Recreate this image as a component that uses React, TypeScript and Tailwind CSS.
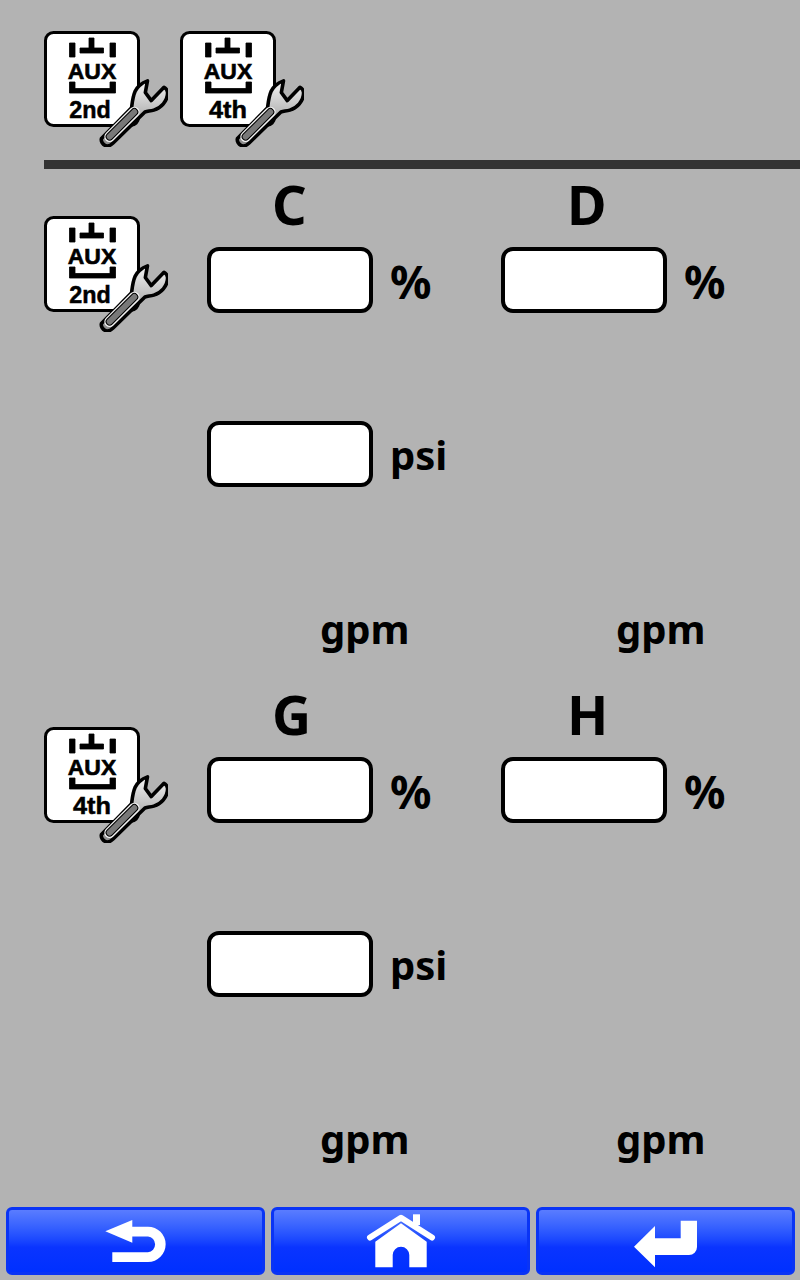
import { useId } from 'react';

function AuxWrench({ label }: { label: string }) {
  const id = useId();
  const wrench = 'M102.700 51.700 L100.700 62.700 L106.300 70.300 L118.300 57.700 C120.500 59 121.700 61 121.700 63 C121.700 67 120 70.500 117.700 73.300 C115 76.500 112 78.300 108.700 79.300 C105.500 80.200 103 80.200 100.300 81 L70.300 110.300 C68 112.500 65.500 113.500 63.700 113 C60.500 112 58.500 108.500 59.300 106 L87.700 77 C88.500 71 89 66 91 61.700 C92.500 59 93.500 57.500 95.300 56 C97.500 54 100 52.500 102.700 51.700 Z';
  return (
    <svg width="124" height="116" viewBox="0 0 124 116" className="block shrink-0">
      <defs>
        <linearGradient id={id} x1="0" y1="0" x2="0" y2="1">
          <stop offset="0" stopColor="#f4f4f4" />
          <stop offset="0.45" stopColor="#bdbdbd" />
          <stop offset="1" stopColor="#8a8a8a" />
        </linearGradient>
      </defs>
      <rect x="1.500" y="1.500" width="93" height="93" rx="8" fill="#fff" stroke="#000" strokeWidth="3" />
      <path d="M25.500 12h5.500v14h-5.500zM66 12h5.500v14H66zM45 7h5v10h9.500v5H36v-5h9zM25.500 51h5.500v6.500h35V51h5.500v11H25.500z" fill="#000" stroke="#000" strokeWidth="0.800" />
      <text x="48" y="48" textAnchor="middle" textLength="48.500" lengthAdjust="spacingAndGlyphs" fontFamily="'Liberation Sans', sans-serif" fontWeight="700" fontSize="22.500" fill="#000" stroke="#000" strokeWidth="0.600">AUX</text>
      <text x={label === '2nd' ? 46 : 48} y="86.500" textAnchor="middle" textLength={label === '2nd' ? 41.500 : 38} lengthAdjust="spacingAndGlyphs" fontFamily="'Liberation Sans', sans-serif" fontWeight="700" fontSize="24.500" fill="#000" stroke="#000" strokeWidth="0.500">{label}</text>
      <g transform="translate(90 82) scale(1.06) translate(-90 -82)">
        <path d={wrench} fill={`url(#${id})`} stroke="#000" strokeWidth="3.400" strokeLinejoin="round" />
        <path d="M90.300 81 L67 104.300" stroke="#f4f4f4" strokeWidth="10" strokeLinecap="round" />
        <path d="M90.300 81 L67 104.300" stroke="#000" strokeWidth="7.500" strokeLinecap="round" />
        <path d="M90.300 81 L67 104.300" stroke="#787878" strokeWidth="5.500" strokeLinecap="round" />
      </g>
    </svg>
  );
}

function Field({ unit }: { unit: string }) {
  return (
    <div className="flex h-[66px] items-center">
      <div className="h-[66px] w-[166px] rounded-[12px] border-[4px] border-black bg-white" />
      {unit === '%' ? (
        <span className="ml-[17px] pt-[2px] text-[46px] leading-none font-bold text-black">{unit}</span>
      ) : (
        <span className="ml-[17px] pt-[2px] text-[40px] leading-none font-bold text-black">{unit}</span>
      )}
    </div>
  );
}

function Column({ letter, second }: { letter: string; second?: boolean }) {
  return (
    <div className="w-[294px] shrink-0">
      <div className={second ? 'flex h-[78px] items-center pb-[9px] pl-[66px] text-[54px] leading-none font-bold text-black' : 'flex h-[78px] items-center pb-[9px] pl-[65px] text-[54px] leading-none font-bold text-black'}>{letter}</div>
      <Field unit="%" />
      {second ? <div className="mt-[108px] h-[66px]" /> : <div className="mt-[108px]"><Field unit="psi" /></div>}
      <div className={second ? 'mt-[108px] flex h-[66px] items-center pt-[2px] pl-[115px] text-[40px] leading-none font-bold text-black' : 'mt-[108px] flex h-[66px] items-center pt-[2px] pl-[113px] text-[40px] leading-none font-bold text-black'}>gpm</div>
    </div>
  );
}

function Section({ label, letters }: { label: string; letters: [string, string] }) {
  return (
    <section className="flex h-[510px] pl-[44px]">
      <div className={label === '2nd' ? 'w-[163px] shrink-0 pt-[47px]' : 'w-[163px] shrink-0 pt-[48px]'}>
        <AuxWrench label={label} />
      </div>
      <Column letter={letters[0]} />
      <Column letter={letters[1]} second />
    </section>
  );
}

function NavButton({ children }: { children: React.ReactNode }) {
  return (
    <button className="flex h-[68px] w-[259px] items-center justify-center rounded-[6px] border-[3px] border-[#0a34f5] bg-gradient-to-b from-[#5a7cff] via-[#0a34ff] via-60% to-[#0030ff]">
      {children}
    </button>
  );
}

export default function App() {
  return (
    <div className="h-[1280px] w-[800px] overflow-hidden bg-[#b3b3b3] font-['Noto_Sans',sans-serif]">
      <div className="flex h-[129px] gap-[12px] pt-[31px] pl-[44px]">
        <AuxWrench label="2nd" />
        <AuxWrench label="4th" />
      </div>
      <div className="mt-[31px] ml-[44px] h-[9px] bg-[#333333]" />
      <Section label="2nd" letters={['C', 'D']} />
      <Section label="4th" letters={['G', 'H']} />
      <div className="flex gap-[6px] pt-[18px] pl-[6px]">
        <NavButton>
          <svg width="62" height="42" viewBox="0 0 62 42" fill="#fff">
            <path d="M0.300 11.300 L27.300 0 V6.700 H43 A17.600 17.600 0 0 1 43 42 H7.300 V32.300 H43 A8 8 0 0 0 43 16.400 H27.300 V22.700 Z" />
          </svg>
        </NavButton>
        <NavButton>
          <svg width="70" height="54" viewBox="0 0 70 54" fill="#fff">
            <path d="M47 0.300 H54 V11 H47 Z" />
            <path d="M4 23.500 L35 3.700 L66 23.500" fill="none" stroke="#fff" strokeWidth="6" strokeLinecap="round" strokeLinejoin="round" />
            <path fillRule="evenodd" d="M9.300 27.700 L35 9.300 L60.700 27.700 V53.300 H43.300 V41 A8.300 8.300 0 0 0 26.700 41 V53.300 H9.300 Z" />
          </svg>
        </NavButton>
        <NavButton>
          <svg width="63" height="54" viewBox="0 -6 63 54" fill="#fff">
            <path d="M0 26.700 L21 6 V18.300 H46.700 V0.700 H63 V27 A8 8 0 0 1 55 35 H21 V47.300 Z" />
          </svg>
        </NavButton>
      </div>
    </div>
  );
}
